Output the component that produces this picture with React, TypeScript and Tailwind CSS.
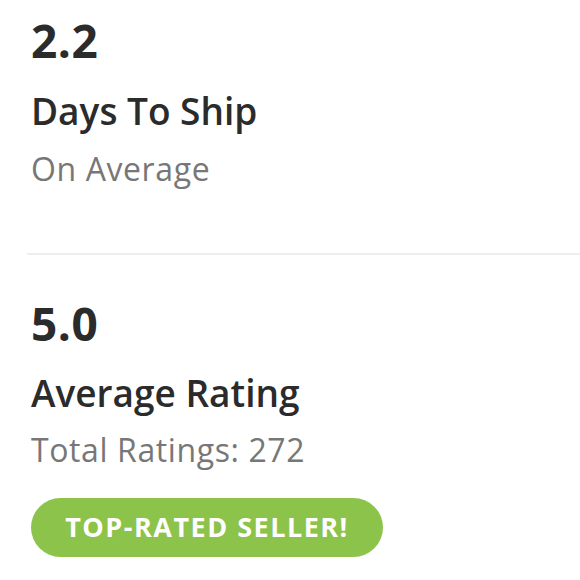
export default function App() {
  return (
    <div className="w-[580px] h-[580px] bg-white overflow-hidden text-[#2b2b2b]" style={{ fontFamily: '"Open Sans", sans-serif' }}>
      <div className="pl-[31px] pt-[17px]">
        <div className="text-[46px] font-bold leading-none tracking-[0.5px]">2.2</div>
        <div className="mt-[29px] text-[37px] font-semibold leading-none">Days To Ship</div>
        <div className="mt-[24px] text-[32px] leading-none tracking-[0.6px] text-[#777]">On Average</div>
      </div>
      <div className="ml-[27px] mt-[68px] h-[2px] bg-[#eeeeee]" />
      <div className="pl-[31px] pt-[45px]">
        <div className="text-[46px] font-bold leading-none tracking-[0.5px]">5.0</div>
        <div className="mt-[28px] text-[37px] font-semibold leading-none">Average Rating</div>
        <div className="mt-[23px] text-[32px] leading-none tracking-[0.6px] text-[#777]">Total Ratings: 272</div>
        <div className="mt-[32px] inline-flex h-[59px] w-[352px] items-center justify-center rounded-full bg-[#8cc34a] text-[27px] font-bold tracking-[1.5px] text-white">
          TOP-RATED SELLER!
        </div>
      </div>
    </div>
  );
}
